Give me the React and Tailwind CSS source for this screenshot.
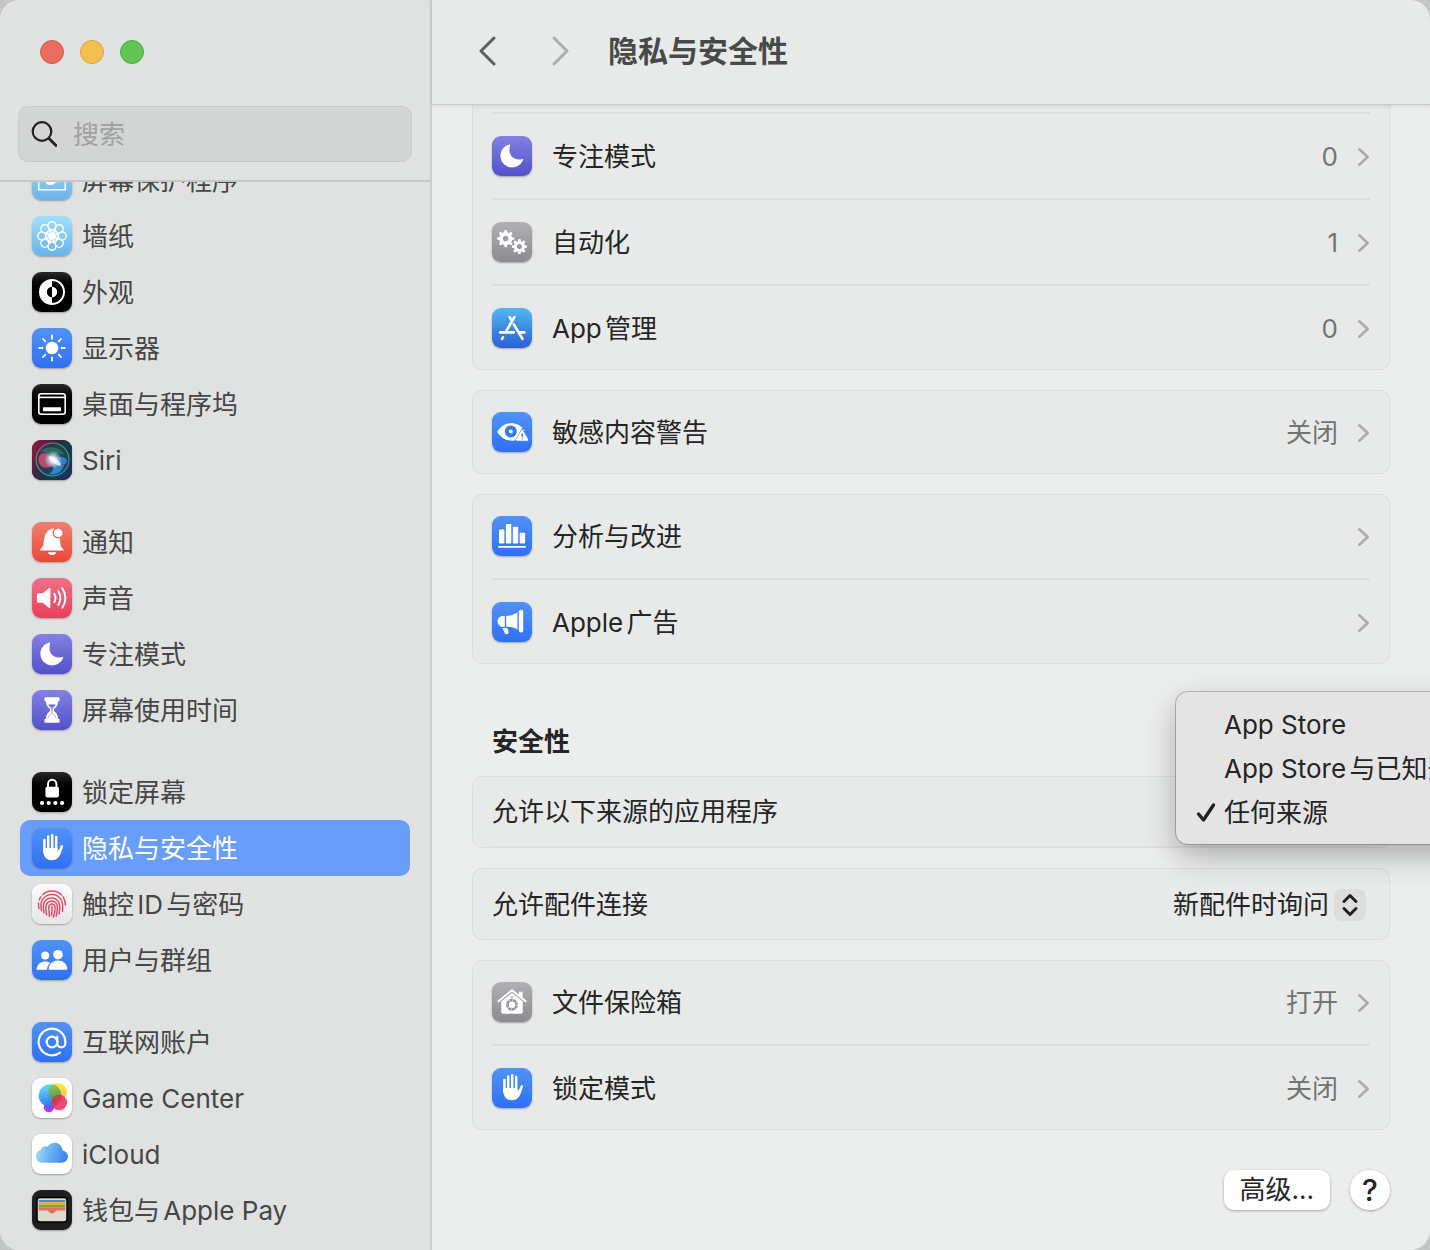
import { useState } from "react";
import { AtSign } from "lucide-react";

const blue = "bg-linear-to-b from-[#5192f7] to-[#2f70f4]";
const purple = "bg-linear-to-b from-[#8481e2] to-[#5250cb]";
const black = "bg-linear-to-b from-[#2a2a2a] to-black to-50%";
const gray = "bg-linear-to-b from-[#b0b0b4] to-[#8b8b90]";
const sky = "bg-linear-to-b from-[#9fe0f9] to-[#69b3e9]";
const red = "bg-linear-to-b from-[#ef7f70] to-[#ea4636]";
const pink = "bg-linear-to-b from-[#ee6f88] to-[#ea3d5a]";
const white = "bg-white";

const steps = [0, 45, 90, 135, 180, 225, 270, 315];

function Gear({ x, y, r, hole }) {
  return (
    <g transform={`translate(${x} ${y})`}>
      {steps.map((a) => (
        <rect key={a} x="-1.4" y={-r} width="2.8" height={r - hole - 1} rx="0.8" fill="#fff" transform={`rotate(${a})`} />
      ))}
      <circle r={(r - 2 + hole) / 2} fill="none" stroke="#fff" strokeWidth={r - 2 - hole} />
    </g>
  );
}

const glyphs = {
  saver: (
    <g>
      <rect x="6.8" y="9" width="26.4" height="20.8" fill="none" stroke="#fff" strokeWidth="1.4" />
      <path d="M14 13c-3 4-2 12 4 12 3 0 5-1 6-3-2 0-3-1-4-2-3 0-5-3-6-7zM22 20c2 2 4 3 6 2-1-2-3-3-6-2z" fill="#fff" />
    </g>
  ),
  flower: (
    <g fill="none" stroke="#fff" strokeWidth="1.4">
      {steps.map((a) => (
        <g key={a} transform={`rotate(${a} 20 20)`}>
          <circle cx="20" cy="9.8" r="4" />
          <path d="M16.8 12.3 20 20l3.2-7.7" />
          <path d="M17.6 13.1 21.4 17.6" strokeWidth="1" />
        </g>
      ))}
    </g>
  ),
  appearance: (
    <g>
      <circle cx="20" cy="20" r="12" fill="none" stroke="#fff" strokeWidth="2" />
      <path d="M20 8a12 12 0 0 0 0 24z" fill="#fff" />
      <path d="M20 14.8a5.2 5.2 0 0 0 0 10.4z" fill="#000" />
      <path d="M20 14.8a5.2 5.2 0 0 1 0 10.4z" fill="#fff" />
    </g>
  ),
  sun: (
    <g stroke="#fff" strokeWidth="2" strokeLinecap="round">
      <circle cx="20" cy="20" r="6.3" fill="#fff" stroke="none" />
      {steps.map((a) => (
        <path key={a} d="M20 7.4v3" transform={`rotate(${a} 20 20)`} />
      ))}
    </g>
  ),
  dock: (
    <g fill="none" stroke="#fff" strokeWidth="1.6">
      <rect x="6.8" y="9.8" width="26.4" height="20.4" rx="2.4" />
      <path d="M7 13.4h26" />
      <rect x="11" y="23.2" width="18" height="4" fill="#fff" stroke="none" rx="0.5" />
    </g>
  ),
  siri: (
    <g>
      <defs>
        <linearGradient id="siriBg" x1="0" y1="0.2" x2="1" y2="0.8">
          <stop offset="0" stopColor="#8a1a41" />
          <stop offset="0.35" stopColor="#3c2340" />
          <stop offset="0.6" stopColor="#143c45" />
          <stop offset="1" stopColor="#1d2f63" />
        </linearGradient>
        <radialGradient id="siriGlow">
          <stop offset="0" stopColor="#fff" />
          <stop offset="0.3" stopColor="#e9f3ff" stopOpacity="0.9" />
          <stop offset="1" stopColor="#b9d8ff" stopOpacity="0" />
        </radialGradient>
        <linearGradient id="siriRing" x1="0" y1="0" x2="1" y2="1">
          <stop offset="0" stopColor="#c24a77" />
          <stop offset="0.5" stopColor="#43a58b" />
          <stop offset="1" stopColor="#3a7fd8" />
        </linearGradient>
      </defs>
      <rect width="40" height="40" rx="9" fill="url(#siriBg)" />
      <circle cx="20.5" cy="19.5" r="16.5" fill="#1f4f5c" fillOpacity="0.5" stroke="url(#siriRing)" strokeWidth="1.2" />
      <path d="M9 11c7-6 18-5 24 4-8-3-12 0-15 5-2-5-4-8-9-9z" fill="#33a77b" fillOpacity="0.45" />
      <path d="M6.500 19c1-7 8-8 14 0l6 7c-3 1-5 1-7 0-6 4-13 1-13-7z" fill="#e0527f" fillOpacity="0.75" />
      <path d="M20 20c6-4 13-5 15 1-1 6-8 5-15-1zM20 21c2 6 2 10-3 13 8 2 13-2 15-9z" fill="#3f93ee" fillOpacity="0.75" />
      <circle cx="21" cy="19.500" r="9" fill="url(#siriGlow)" />
      <ellipse cx="23" cy="21" rx="7.500" ry="2.400" fill="#fff" fillOpacity="0.75" transform="rotate(35 23 21)" />
    </g>
  ),
  bell: (
    <g>
      <path d="M8.3 28.6c-.5-1.4 2.8-3.2 3.2-6 .6-5 .7-13.4 8.5-16 2.5 0 3 .8 3.6 1.6C27.500 11 28 17 28.500 22.500c.3 3 3.700 4.700 3.200 6.100z" fill="#fff" />
      <path d="M16 30.200h8.200a4.200 3.600 0 0 1-8.200 0z" fill="#fff" />
      <circle cx="26.2" cy="11" r="5.6" fill="#ee6d5d" />
      <circle cx="26.2" cy="11" r="4.3" fill="#fff" />
    </g>
  ),
  speaker: (
    <g>
      <path d="M6.500 15.300h4.300l6-5c.8-.6 1.600-.3 1.600.7v18c0 1-.8 1.300-1.600.7l-6-5H6.500c-.9 0-1.500-.5-1.500-1.400v-6.600c0-.9.6-1.400 1.500-1.400z" fill="#fff" />
      <path d="M22.300 15.800q2.400 4.200 0 8.400M26.300 13q4.200 7 0 14M30.300 10.200q6.200 9.800 0 19.600" fill="none" stroke="#fff" strokeWidth="1.9" strokeLinecap="round" />
    </g>
  ),
  moon: <path d="M17.400 8.400c-5.400 1.400-9 6-9 11.400 0 6.400 5.200 11.600 11.600 11.600 5 0 9.500-3.100 11.200-7.600.3-.8-.2-1-.8-.8-7.600 2.600-15.400-3.600-12.300-13.500.3-.8 0-1.300-.7-1.100z" fill="#fff" />,
  hourglass: (
    <g>
      <path d="M13.200 8h13.600v2.400H13.200zM13.200 29.600h13.600V32H13.200z" fill="#fff" stroke="#fff" strokeWidth="1.6" strokeLinejoin="round" />
      <path d="M14.200 9c.2 6 1.300 7.300 4.200 10v2c-2.900 2.700-4 4-4.200 10h11.600c-.2-6-1.300-7.300-4.200-10v-2c2.900-2.700 4-4 4.200-10z" fill="#fff" stroke="#fff" strokeWidth="1" />
      <path d="M16 12h8l-.6 2.200h-6.800z" fill="#fff" />
      <path d="M16.200 14.600h7.600c-.8 1.600-1.800 2.500-3.200 3.700h-1.200c-1.400-1.200-2.400-2.100-3.200-3.700z" fill="#6f6dd8" />
      <path d="M18.800 18h2.400l-.6 5.500 3 3.200c.4.700.7 1.400.8 2.100h-8.800c.1-.7.400-1.400.8-2.100l3-3.200z" fill="#6563d4" />
      <path d="M20 17.500v6M20 23.500l4 5.200h-8z" fill="#fff" stroke="#fff" strokeWidth="1" />
    </g>
  ),
  lock: (
    <g fill="#fff">
      <path d="M16 16v-4a4.200 4.200 0 0 1 8.400 0v4" fill="none" stroke="#fff" strokeWidth="1.9" />
      <rect x="13.4" y="14.8" width="13.6" height="10.6" rx="1.8" />
      <circle cx="10" cy="31" r="2.1" />
      <circle cx="16.7" cy="31" r="2.1" />
      <circle cx="23.4" cy="31" r="2.1" />
      <circle cx="30.1" cy="31" r="2.1" />
    </g>
  ),
  hand: (
    <g stroke="#fff" strokeLinecap="round" fill="none">
      <path d="M12.400 12v12M16.200 8.400V22M20.200 7.200V22M24.200 9v14" strokeWidth="2.5" />
      <path d="M29.800 18.400 26.800 26" strokeWidth="2.600" />
      <path d="M11.200 20h14.200v3.200l3.200-3 1.900-.8c-1.300 4.600-2.500 8.300-4.700 10.700-2.500 2.700-8 2.900-10.700 1-3-2-3.900-5.600-3.900-11.100z" fill="#fff" stroke="none" />
    </g>
  ),
  touch: (
    <g fill="none" stroke="#e0506a" strokeWidth="1.5" strokeLinecap="round">
      <path d="M10.500 10.800a13.600 13.600 0 0 1 19.200.2M7.200 16c.6-1.400 1-2.200 1.700-3.200M31.200 13c1.600 2.700 2.200 5 2.200 8M7 24.500c-.6-2-.6-3.600-.4-5.500" />
      <path d="M9.300 26.500c-.8-5-.6-8.600 1.700-11.600 4.600-6 13.600-5.800 17.800.4 2 3 2.400 6.800 1.700 12" />
      <path d="M12 29c-.9-4.600-1.400-8.400.6-11.300 3.400-5.200 11-5 14 .2 1.800 3.200 1.400 7.400.5 12.100" />
      <path d="M14.600 31c-.4-3.400-1.400-7.600-.2-10.400 2.200-5 8.700-4.800 10.500-.3 1.100 3 .4 7.600-.8 11.900" />
      <path d="M17.500 32.500c-.2-4-1.300-7.600-.6-10.200 1-3.200 5.200-3.200 6 0 .6 2.800-.4 7-1.500 10.700" />
      <path d="M19.900 22.200c.3 3.200.1 6-.3 9" />
    </g>
  ),
  users: (
    <g fill="#fff">
      <circle cx="13.2" cy="15.5" r="4" />
      <path d="M5.500 29.800c-.7 0-1-.6-.8-1.400.9-4.400 4.300-7 8.500-7 2 0 3.600.5 5 1.500-2 1.700-3 4-3.200 6.900z" />
      <circle cx="26" cy="14.7" r="4.8" />
      <path d="M17.600 29.800c-.7 0-1-.5-.9-1.300.6-4.700 4.400-7.900 9.300-7.900s8.700 3.200 9.300 7.900c.1.800-.2 1.300-.9 1.300z" />
    </g>
  ),
  game: (
    <g>
      <defs>
        <linearGradient id="gcBlue" x1="0" y1="0" x2="0.3" y2="1">
          <stop offset="0" stopColor="#6fe3f7" />
          <stop offset="1" stopColor="#2f7af0" />
        </linearGradient>
        <linearGradient id="gcYellow" x1="0.5" y1="0" x2="0.3" y2="1">
          <stop offset="0" stopColor="#fbe94a" />
          <stop offset="1" stopColor="#f3b93a" />
        </linearGradient>
        <linearGradient id="gcGreen" x1="0" y1="0" x2="0" y2="1">
          <stop offset="0" stopColor="#a5c93c" />
          <stop offset="1" stopColor="#3b9c57" />
        </linearGradient>
        <clipPath id="gcClip">
          <circle cx="18" cy="17.5" r="11.3" />
        </clipPath>
      </defs>
      <circle cx="17" cy="29" r="5.2" fill="#a93af0" />
      <circle cx="25.8" cy="14" r="9" fill="url(#gcYellow)" />
      <circle cx="18" cy="17.5" r="11.3" fill="url(#gcBlue)" />
      <circle cx="25.8" cy="14" r="9" fill="url(#gcGreen)" clipPath="url(#gcClip)" />
      <circle cx="27.3" cy="24.5" r="7.8" fill="#f0326a" fillOpacity="0.9" />
      <circle cx="27.3" cy="24.5" r="7.8" fill="#c54043" fillOpacity="0.7" clipPath="url(#gcClip)" />
    </g>
  ),
  cloud: (
    <g>
      <defs>
        <linearGradient id="cloudFill" x1="0" y1="0.5" x2="1" y2="0.7">
          <stop offset="0" stopColor="#a6daf5" />
          <stop offset="0.5" stopColor="#62abf1" />
          <stop offset="1" stopColor="#3d7de8" />
        </linearGradient>
      </defs>
      <path d="M10.500 28.800a6.600 6.600 0 0 1-1.900-12.900c.6-3 4.300-4.700 7-3.100 3.400-6.600 14.200-5.200 15 3.800 7.700 1.600 6.900 11.700-.8 12.200z" fill="url(#cloudFill)" />
      <path d="M15.600 12.800c-1.400 2-1.400 4-.6 6" stroke="#4a97ea" strokeOpacity="0.5" fill="none" />
    </g>
  ),
  wallet: (
    <g>
      <rect x="5" y="7.5" width="30" height="24.5" rx="3" fill="#dcd9ce" stroke="#000" strokeWidth="1.5" />
      <path d="M6.800 10h26.400v2.200H6.800z" fill="#4e8bbf" />
      <path d="M6.800 12.200h26.400v2.700H6.800z" fill="#e6ac3d" />
      <path d="M6.800 14.900h26.400v2.700H6.800z" fill="#6aaa4e" />
      <path d="M6.800 17.600h26.400v2.800h-8.600c-1.400 1.500-2.800 3-4.600 3s-3.200-1.500-4.600-3H6.800z" fill="#e2705f" />
    </g>
  ),
  gears: (
    <g>
      <Gear x={13.7} y={16.6} r={8.6} hole={2.8} />
      <Gear x={27.4} y={24.6} r={7.5} hole={2.5} />
    </g>
  ),
  store: (
    <g stroke="#fff" strokeWidth="2.6" strokeLinecap="round" fill="none">
      <path d="M22.400 9 13.700 24.200M17.600 9l2 3.400M21.800 16.400 30.600 31M8.200 24.400h13.600M27.800 24.400h4.600M11 29.300l-.9 1.500" />
    </g>
  ),
  eye: (
    <g>
      <path d="M5.200 19.800c3.400-5.400 8.600-8.500 14.200-8.500 5 0 9.800 2.500 13 7.200l-6 9c-7 2.800-16.200 1-21.200-7.700z" fill="#fff" />
      <circle cx="18.8" cy="19.5" r="6" fill="#3478f3" />
      <circle cx="18.8" cy="19.5" r="2" fill="#fff" />
      <path d="M30.200 15.800 38.200 30H22.200z" fill="#3f82f5" />
      <path d="M29.300 18.400c.5-.8 1.300-.8 1.800 0l5 8.900c.4.8 0 1.500-.9 1.500h-10c-.9 0-1.300-.7-.9-1.500z" fill="#fff" />
      <path d="M30.200 21.500v3.500M30.200 26.300v1" stroke="#3478f3" strokeWidth="1.4" />
    </g>
  ),
  bars: (
    <g fill="#fff">
      <rect x="7" y="13.6" width="5.4" height="14" rx="0.8" />
      <rect x="13.9" y="8" width="5.4" height="19.6" rx="0.8" />
      <rect x="20.8" y="10.8" width="5.4" height="16.8" rx="0.8" />
      <rect x="27.7" y="16.8" width="5.4" height="10.8" rx="0.8" />
      <rect x="6" y="30" width="28" height="1.7" rx="0.8" />
    </g>
  ),
  horn: (
    <g fill="#fff">
      <rect x="26.8" y="7.8" width="4.4" height="22.6" rx="2" />
      <path d="M25.400 10.400v17c-3.600-2-7-2.600-11.200-2.700V14c4.400-.2 7.600-1.500 11.200-3.600z" />
      <path d="M12.800 14v10.700h-2c-3 0-5.200-2.200-5.200-5.300S7.800 14 10.800 14z" />
      <path d="M10.400 26h4.200c.7.200 1 .5 1.200 1.200l.9 3c.3 1.700-2.700 2.700-3.800 1.200z" />
    </g>
  ),
  house: (
    <g>
      <path d="M6.400 19.200 20 8.200l13.600 11" fill="none" stroke="#fff" strokeWidth="2" strokeLinecap="round" strokeLinejoin="round" />
      <path d="M27 9.800h3.600v6L27 12.800z" fill="#fff" />
      <path d="M9.200 19.600 20 11l10.800 8.600v10.200c0 1.200-.8 2-2 2H11.200c-1.200 0-2-.8-2-2z" fill="#fff" />
      <circle cx="20" cy="22.8" r="4.600" fill="none" stroke="#97979b" strokeWidth="2.8" />
      <circle cx="20" cy="22.8" r="4.600" fill="none" stroke="#fff" strokeWidth="2.8" strokeDasharray="0.500 3.113" />
      <circle cx="20" cy="15.200" r="0.9" fill="#97979b" />
    </g>
  ),
};

function AppIcon({ name, tone }) {
  return (
    <span className={`flex size-10 shrink-0 items-center justify-center rounded-[9px] shadow-[0_1px_2px_rgba(0,0,0,0.3)] ${tone}`}>
      {name === "at" ? (
        <AtSign className="size-8 text-white" strokeWidth={1.6} />
      ) : (
        <svg viewBox="0 0 40 40" className="size-10" aria-hidden>
          {glyphs[name]}
        </svg>
      )}
    </span>
  );
}

const sidebarGroups = [
  [
    { label: "屏幕保护程序", icon: "saver", tone: sky },
    { label: "墙纸", icon: "flower", tone: sky },
    { label: "外观", icon: "appearance", tone: black },
    { label: "显示器", icon: "sun", tone: blue },
    { label: "桌面与程序坞", icon: "dock", tone: black },
    { label: "Siri", icon: "siri", tone: black },
  ],
  [
    { label: "通知", icon: "bell", tone: red },
    { label: "声音", icon: "speaker", tone: pink },
    { label: "专注模式", icon: "moon", tone: purple },
    { label: "屏幕使用时间", icon: "hourglass", tone: purple },
  ],
  [
    { label: "锁定屏幕", icon: "lock", tone: black },
    { label: "隐私与安全性", icon: "hand", tone: blue },
    { label: "触控ID与密码", icon: "touch", tone: "bg-linear-to-b from-[#fbfbfb] to-[#e6e6e6]" },
    { label: "用户与群组", icon: "users", tone: blue },
  ],
  [
    { label: "互联网账户", icon: "at", tone: blue },
    { label: "Game Center", icon: "game", tone: white },
    { label: "iCloud", icon: "cloud", tone: white },
    { label: "钱包与Apple Pay", icon: "wallet", tone: "bg-[#1e1e1e]" },
  ],
];

const sources = ["App Store", "App Store与已知开发者", "任何来源"];

function Sidebar() {
  const [active, setActive] = useState("隐私与安全性");

  return (
    <aside className="flex w-[432px] shrink-0 flex-col border-r-2 border-[#cdcfce] bg-[#e0e2e1]">
      <div className="flex shrink-0 flex-col gap-[42px] border-b-2 border-[#c6c8c7] px-[18px] pt-10 pb-[18px]">
        <div className="flex gap-4 pl-[22px]">
          <button type="button" aria-label="关闭" className="size-6 rounded-full border border-[#d9544a] bg-[#ed6a5e]" />
          <button type="button" aria-label="最小化" className="size-6 rounded-full border border-[#d9a13c] bg-[#f5bf4f]" />
          <button type="button" aria-label="缩放" className="size-6 rounded-full border border-[#4dab3d] bg-[#61c554]" />
        </div>
        <label className="flex h-14 items-center gap-4 rounded-[10px] border border-[#c8cac9] bg-[#d3d5d4] px-3">
          <svg viewBox="0 0 26 26" className="size-[26px] shrink-0" fill="none" stroke="#1f1f1f" strokeLinecap="round" aria-hidden>
            <circle cx="11" cy="10.5" r="9.3" strokeWidth="2.2" />
            <path d="M18 17.500 25 24.500" strokeWidth="2.8" />
          </svg>
          <input
            type="search"
            aria-label="搜索"
            placeholder="搜索"
            className="w-full min-w-0 bg-transparent pt-0.5 outline-none placeholder:text-[#a0a2a1]"
          />
        </label>
      </div>
      <nav className="min-h-0 flex-1 overflow-hidden px-5">
        <div className="-mt-7.5 flex flex-col gap-[26px]">
          {sidebarGroups.map((group) => (
            <div key={group[0].label} className="flex flex-col">
              {group.map(({ label, icon, tone }) => (
                <a
                  key={label}
                  href="#"
                  onClick={() => setActive(label)}
                  className={`flex h-14 items-center gap-2.5 rounded-[10px] px-3 whitespace-nowrap ${
                    active === label ? "bg-[#699dfa] text-white" : "text-[#454645]"
                  }`}
                >
                  <AppIcon name={icon} tone={tone} />
                  <span className="pt-0.5">{label}</span>
                </a>
              ))}
            </div>
          ))}
        </div>
      </nav>
    </aside>
  );
}

function Card({ className = "rounded-[10px]", children }) {
  return (
    <div className={`relative divide-y-2 divide-[#dddfde] bg-[#e8eae9] px-5 shadow-[inset_0_0_0_1px_#dcdedd] ${className}`}>
      {children}
    </div>
  );
}

function Row({ icon, tone, label, value }) {
  return (
    <button type="button" className="box-content flex h-[84px] w-full items-center gap-5 text-left">
      <AppIcon name={icon} tone={tone} />
      <span className="flex-1 pt-0.5">{label}</span>
      {value && <span className="pt-0.5 text-[#737574]">{value}</span>}
      <svg viewBox="0 0 12 20" className="h-5 w-3" fill="none" stroke="#aaacab" strokeWidth="2.6" strokeLinecap="round" strokeLinejoin="round" aria-hidden>
        <path d="M1.300 3.300l8.300 7.700-8.300 7.700" />
      </svg>
    </button>
  );
}

function SourceMenu() {
  const [checked, setChecked] = useState("任何来源");

  return (
    <div
      role="menu"
      className="absolute -top-[84px] left-full z-10 -ml-[214px] rounded-xl bg-[#e4e4e4] py-2.5 pr-6 pl-4 shadow-[0_0_0_1px_rgba(0,0,0,0.22),0_12px_30px_rgba(0,0,0,0.28)]"
    >
      {sources.map((name) => (
        <button
          key={name}
          type="button"
          role="menuitemradio"
          aria-checked={checked === name}
          onClick={() => setChecked(name)}
          className="flex h-11 items-center gap-2 pt-0.5 whitespace-nowrap"
        >
          <svg viewBox="0 0 24 24" className="size-6" fill="none" stroke="#222" strokeWidth="3.4" strokeLinecap="round" strokeLinejoin="round" aria-hidden>
            {checked === name && <path d="M6.500 13l5 6L21.500 4" />}
          </svg>
          {name}
        </button>
      ))}
    </div>
  );
}

export default function App() {
  return (
    <div className="h-screen overflow-hidden bg-[#c4c6c5] font-['Inter','Noto_Sans_CJK_SC',sans-serif] text-[26px] leading-9 text-[#242524] [text-autospace:normal]" lang="zh-CN">
      <div className="flex h-full overflow-hidden rounded-[20px] bg-[#eceeed]">
        <Sidebar />
        <main className="flex min-w-0 flex-1 flex-col">
          <header className="relative z-10 flex h-[104px] shrink-0 items-center gap-[38px] bg-[#e8eae9] pb-0.5 pl-[46px] shadow-[0_1px_0_#c9cbca,0_2px_4px_rgba(0,0,0,0.1)]">
            <div className="flex gap-14">
              <button type="button" aria-label="后退">
                <svg viewBox="0 0 18 30" className="h-[30px] w-[18px]" fill="none" stroke="#5d5f5e" strokeWidth="3" strokeLinecap="round" strokeLinejoin="round">
                  <path d="M16 2 3 15l13 13" />
                </svg>
              </button>
              <button type="button" aria-label="前进">
                <svg viewBox="0 0 18 30" className="h-[30px] w-[18px]" fill="none" stroke="#acaead" strokeWidth="3" strokeLinecap="round" strokeLinejoin="round">
                  <path d="M2 2l13 13L2 28" />
                </svg>
              </button>
            </div>
            <h1 className="text-[30px] font-bold text-[#484a49]">隐私与安全性</h1>
          </header>

          <div className="flex flex-1 flex-col gap-5 px-10">
            <Card className="rounded-b-[10px] pt-2">
              <div />
              <Row icon="moon" tone={purple} label="专注模式" value="0" />
              <Row icon="gears" tone={gray} label="自动化" value="1" />
              <Row icon="store" tone="bg-linear-to-b from-[#55b7ee] to-[#2a5fd6]" label="App管理" value="0" />
            </Card>
            <Card>
              <Row icon="eye" tone={blue} label="敏感内容警告" value="关闭" />
            </Card>
            <Card>
              <Row icon="bars" tone={blue} label="分析与改进" />
              <Row icon="horn" tone={blue} label="Apple广告" />
            </Card>

            <h2 className="mt-10 -mb-1 px-5 font-bold">安全性</h2>
            <Card>
              <div className="flex h-[72px] items-center pt-0.5">允许以下来源的应用程序</div>
              <SourceMenu />
            </Card>
            <Card>
              <label className="flex h-[72px] items-center justify-between pt-0.5">
                <span>允许配件连接</span>
                <span className="flex items-center gap-1 pr-1">
                  <select className="appearance-none bg-transparent outline-none">
                    <option>新配件时询问</option>
                  </select>
                  <svg viewBox="0 0 32 32" className="size-8 rounded-[7px] bg-[#dcdedd]" fill="none" stroke="#222" strokeWidth="3" strokeLinecap="round" strokeLinejoin="round" aria-hidden>
                    <path d="M10 12.500l6-6 6 6M10 19.500l6 6 6-6" />
                  </svg>
                </span>
              </label>
            </Card>
            <Card>
              <Row icon="house" tone={gray} label="文件保险箱" value="打开" />
              <Row icon="hand" tone={blue} label="锁定模式" value="关闭" />
            </Card>

            <div className="mt-5 flex justify-end gap-5">
              <button type="button" className="h-10 rounded-[10px] bg-white px-4 shadow-[0_1px_3px_rgba(0,0,0,0.3)] [text-autospace:no-autospace]">
                高级...
              </button>
              <button type="button" className="size-10 rounded-full bg-white text-[30px] font-medium shadow-[0_1px_3px_rgba(0,0,0,0.3)]">
                ?
              </button>
            </div>
          </div>
        </main>
      </div>
    </div>
  );
}
